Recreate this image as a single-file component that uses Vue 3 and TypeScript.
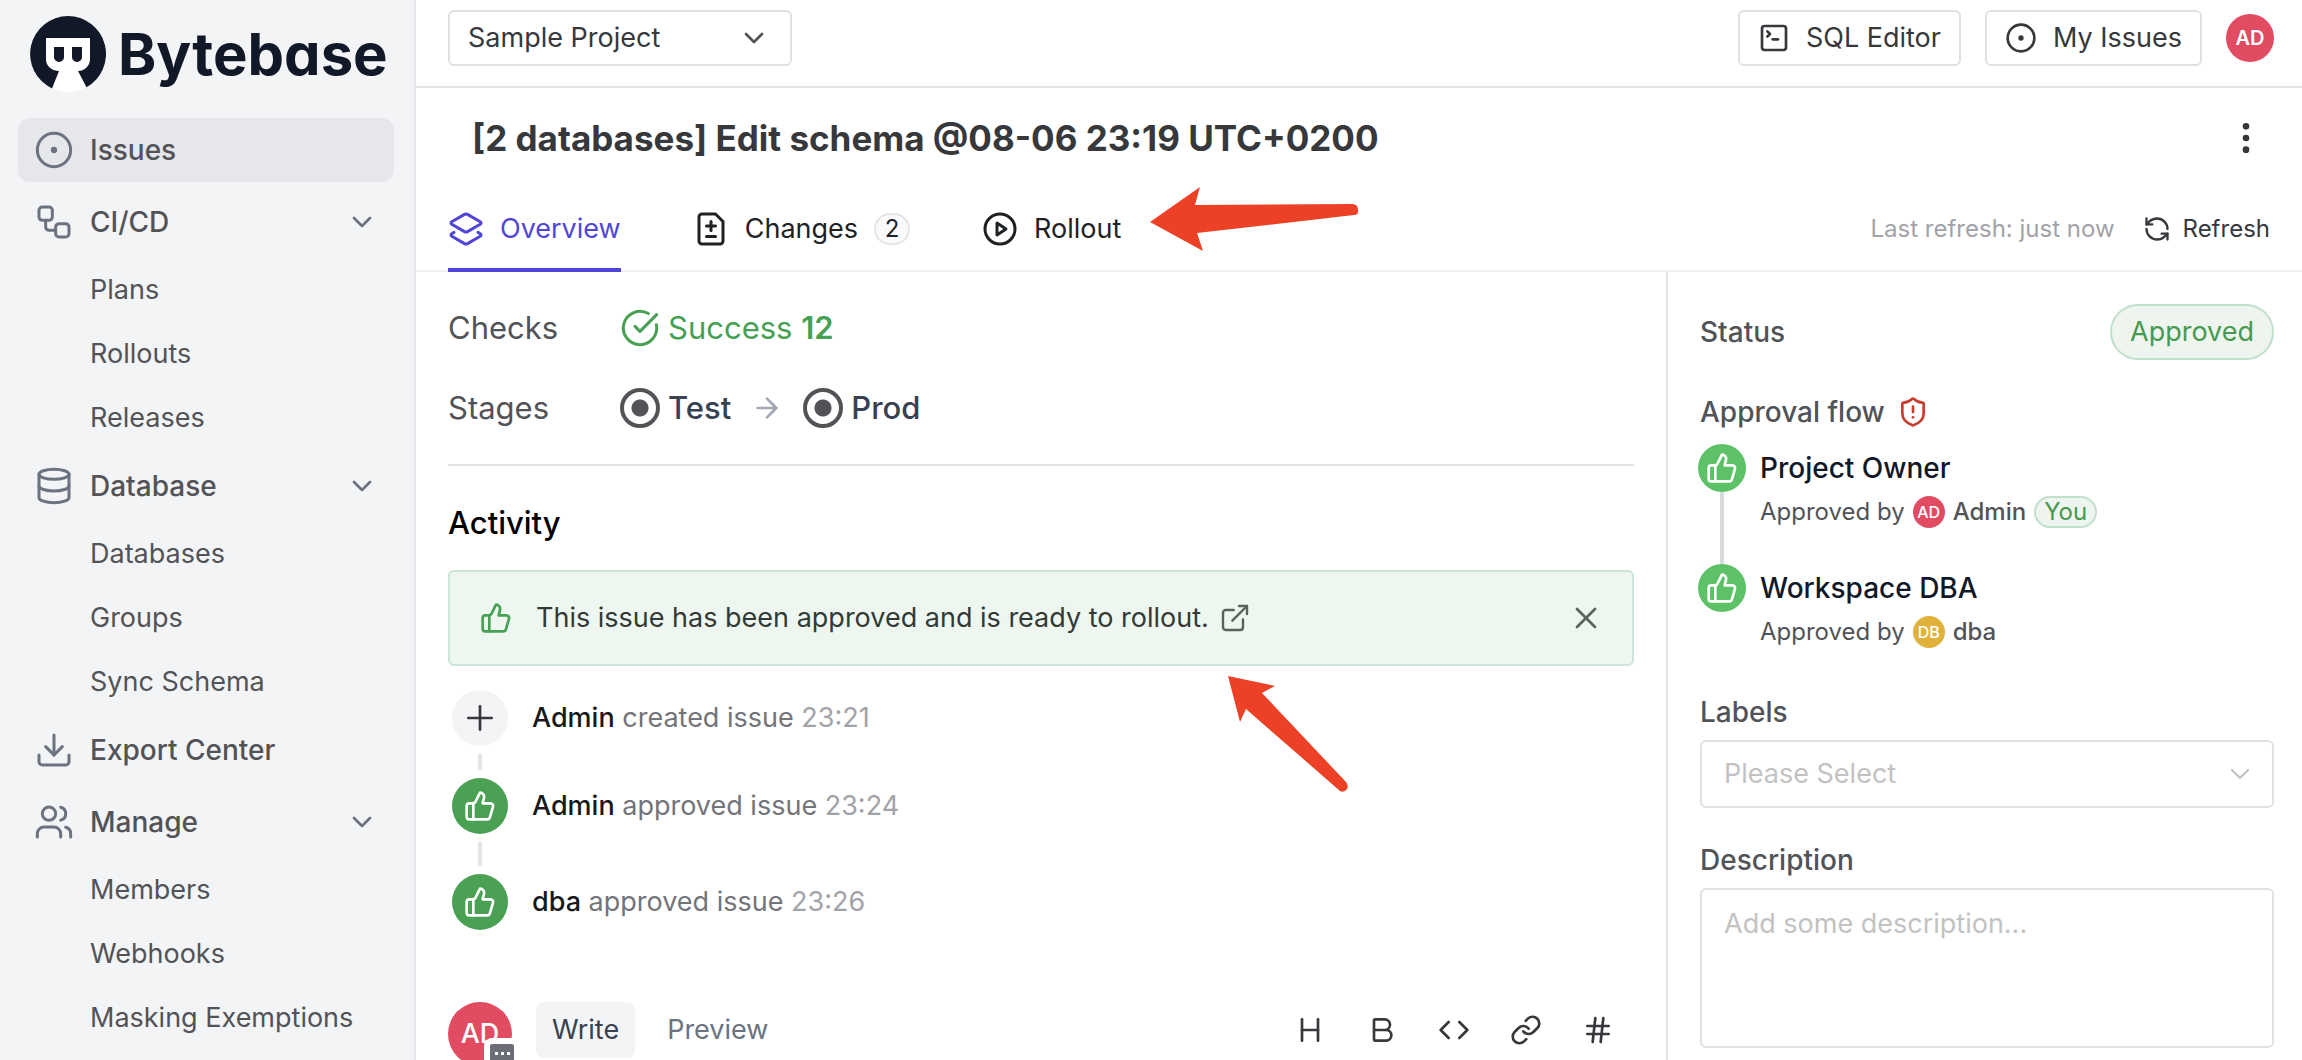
<script setup lang="ts">
import { h, ref, type FunctionalComponent } from 'vue'

type Shape = [tag: string, attrs: Record<string, string | number>]
const p = (d: string): Shape => ['path', { d }]
const c = (cx: number, cy: number, r: number): Shape => ['circle', { cx, cy, r }]
const r = (x: number, y: number, size: number): Shape => ['rect', { x, y, width: size, height: size, rx: 2 }]

const shapes: Record<string, Shape[]> = {
  issue: [c(12, 12, 10), c(12, 12, 1)],
  workflow: [r(3, 3, 8), p('M7 11v4a2 2 0 0 0 2 2h4'), r(13, 13, 8)],
  database: [['ellipse', { cx: 12, cy: 5, rx: 9, ry: 3 }], p('M3 5V19A9 3 0 0 0 21 19V5'), p('M3 12A9 3 0 0 0 21 12')],
  download: [p('M21 15v4a2 2 0 0 1-2 2H5a2 2 0 0 1-2-2v-4'), p('m7 10 5 5 5-5'), p('M12 15V3')],
  users: [p('M16 21v-2a4 4 0 0 0-4-4H6a4 4 0 0 0-4 4v2'), c(9, 7, 4), p('M22 21v-2a4 4 0 0 0-3-3.87'), p('M16 3.13a4 4 0 0 1 0 7.75')],
  chevron: [p('m6 9 6 6 6-6')],
  terminal: [p('m7 11 2-2-2-2'), p('M11 13h4'), r(3, 3, 18)],
  more: [c(12, 5, 1), c(12, 12, 1), c(12, 19, 1)],
  layers: [
    p('M13 13.74a2 2 0 0 1-2 0L2.5 8.87a1 1 0 0 1 0-1.74L11 2.26a2 2 0 0 1 2 0l8.5 4.87a1 1 0 0 1 0 1.74z'),
    p('m20 14.285 1.5.845a1 1 0 0 1 0 1.74L13 21.74a2 2 0 0 1-2 0l-8.5-4.87a1 1 0 0 1 0-1.74l1.5-.845'),
  ],
  diff: [p('M15 2H6a2 2 0 0 0-2 2v16a2 2 0 0 0 2 2h12a2 2 0 0 0 2-2V7Z'), p('M9 10h6'), p('M12 13V7'), p('M9 17h6')],
  play: [c(12, 12, 10), p('M10 8l6 4-6 4z')],
  refresh: [
    p('M21 12a9 9 0 0 0-9-9 9.75 9.75 0 0 0-6.74 2.74L3 8'),
    p('M3 3v5h5'),
    p('M3 12a9 9 0 0 0 9 9 9.75 9.75 0 0 0 6.74-2.74L21 16'),
    p('M16 16h5v5'),
  ],
  check: [p('M21.801 10A10 10 0 1 1 17 3.335'), p('m9 11 3 3L22 4')],
  arrow: [p('M5 12h14'), p('m12 5 7 7-7 7')],
  thumb: [
    p('M7 10v12'),
    p('M15 5.88 14 10h5.83a2 2 0 0 1 1.92 2.56l-2.33 8A2 2 0 0 1 17.5 22H4a2 2 0 0 1-2-2v-8a2 2 0 0 1 2-2h2.76a2 2 0 0 0 1.79-1.11L12 2a3.13 3.13 0 0 1 3 3.88Z'),
  ],
  external: [p('M18 13v6a2 2 0 0 1-2 2H5a2 2 0 0 1-2-2V8a2 2 0 0 1 2-2h6'), p('M15 3h6v6'), p('M10 14 21 3')],
  close: [p('M18 6 6 18'), p('m6 6 12 12')],
  plus: [p('M5 12h14'), p('M12 5v14')],
  shield: [
    p('M20 13c0 5-3.5 7.5-7.66 8.95a1 1 0 0 1-.67-.01C7.5 20.5 4 18 4 13V6a1 1 0 0 1 1-1c2 0 4.5-1.2 6.24-2.72a1.17 1.17 0 0 1 1.52 0C14.51 3.81 17 5 19 5a1 1 0 0 1 1 1z'),
    p('M12 8v4'),
    p('M12 16h.01'),
  ],
  heading: [p('M6 12h12'), p('M6 20V4'), p('M18 20V4')],
  bold: [p('M6 12h9a4 4 0 0 1 0 8H7a1 1 0 0 1-1-1V5a1 1 0 0 1 1-1h7a4 4 0 0 1 0 8')],
  code: [p('m16 18 6-6-6-6'), p('m8 6-6 6 6 6')],
  link: [
    p('M10 13a5 5 0 0 0 7.54.54l3-3a5 5 0 0 0-7.07-7.07l-1.72 1.71'),
    p('M14 11a5 5 0 0 0-7.54-.54l-3 3a5 5 0 0 0 7.07 7.07l1.71-1.71'),
  ],
  hash: [p('M4 9h16'), p('M4 15h16'), p('M10 3 8 21'), p('M16 3l-2 18')],
}

const Icon: FunctionalComponent<{ name: string; size?: number; weight?: number }> = (props) =>
  h(
    'svg',
    {
      class: 'icon',
      width: props.size ?? 32,
      height: props.size ?? 32,
      viewBox: '0 0 24 24',
      fill: 'none',
      stroke: 'currentColor',
      'stroke-width': props.weight ?? 2,
      'stroke-linecap': 'round',
      'stroke-linejoin': 'round',
      'aria-hidden': 'true',
    },
    shapes[props.name].map(([tag, attrs]) => h(tag, attrs)),
  )
Icon.props = ['name', 'size', 'weight']

const nav = [
  { label: 'Issues', icon: 'issue', active: true, children: [] },
  { label: 'CI/CD', icon: 'workflow', children: ['Plans', 'Rollouts', 'Releases'] },
  { label: 'Database', icon: 'database', children: ['Databases', 'Groups', 'Sync Schema'] },
  { label: 'Export Center', icon: 'download', children: [] },
  { label: 'Manage', icon: 'users', children: ['Members', 'Webhooks', 'Masking Exemptions'] },
]

const activities = [
  { who: 'Admin', action: 'created issue', time: '23:21', icon: 'plus' },
  { who: 'Admin', action: 'approved issue', time: '23:24', icon: 'thumb' },
  { who: 'dba', action: 'approved issue', time: '23:26', icon: 'thumb' },
]

const steps = [
  { role: 'Project Owner', initials: 'AD', who: 'Admin', you: true },
  { role: 'Workspace DBA', initials: 'DB', who: 'dba', you: false },
]

const tools = ['heading', 'bold', 'code', 'link', 'hash']
const description = ref('')
</script>

<template>
  <div class="app">
    <aside class="sidebar">
      <a class="brand" href="#">
        <svg width="76" height="76" viewBox="0 0 76 76" aria-hidden="true">
          <circle cx="38" cy="38" r="38" fill="#fff" />
          <path
            fill="#111827"
            d="M38 0a38 38 0 0 1 18.500 71.200L48 55a12 12 0 0 0 12-12V22H16v21a12 12 0 0 0 13 12L22 72.400A38 38 0 0 1 38 0Z"
          />
          <path fill="#111827" d="M24 31h10v10a5 5 0 0 1-10 0zM42 31h10v10a5 5 0 0 1-10 0z" />
        </svg>
        <span>Bytebase</span>
      </a>
      <nav>
        <div v-for="item in nav" :key="item.label" class="group">
          <a href="#" class="item" :class="{ active: item.active }">
            <Icon :name="item.icon" :size="40" :weight="1.8" />
            <span>{{ item.label }}</span>
            <Icon v-if="item.children.length" name="chevron" class="chev" />
          </a>
          <a v-for="child in item.children" :key="child" href="#" class="child">{{ child }}</a>
        </div>
      </nav>
    </aside>

    <div class="main">
      <header class="topbar">
        <div class="select project">
          <select aria-label="Project">
            <option>Sample Project</option>
          </select>
          <Icon name="chevron" />
        </div>
        <div class="actions">
          <button class="btn"><Icon name="terminal" />SQL Editor</button>
          <button class="btn"><Icon name="issue" />My Issues</button>
          <span class="avatar md">AD</span>
        </div>
      </header>

      <div class="title">
        <h1>[2 databases] Edit schema @08-06 23:19 UTC+0200</h1>
        <button class="plain" aria-label="More actions"><Icon name="more" :size="40" /></button>
      </div>

      <div class="tabrow">
        <nav class="tabs">
          <a href="#" class="tab current"><Icon name="layers" :size="36" /><span>Overview</span></a>
          <a href="#" class="tab"><Icon name="diff" :size="36" /><span>Changes</span><span class="count">2</span></a>
          <a href="#" class="tab">
            <Icon name="play" :size="36" /><span>Rollout</span>
            <svg class="mark mark-tab" width="210" height="66" viewBox="0 0 210 66" aria-hidden="true">
              <path d="M1 36 51 1 46 19 203 18Q209 18 209 24V26Q209 29 205 29L48 47 54 65Z" />
            </svg>
          </a>
        </nav>
        <div class="refresh">
          <span class="muted">Last refresh: just now</span>
          <button class="plain"><Icon name="refresh" :size="28" />Refresh</button>
        </div>
      </div>

      <div class="body">
        <section class="content">
          <dl class="facts">
            <div class="fact">
              <dt>Checks</dt>
              <dd class="ok"><Icon name="check" :size="40" :weight="1.8" /><span>Success <b>12</b></span></dd>
            </div>
            <div class="fact">
              <dt>Stages</dt>
              <dd class="stages">
                <span class="stage"><i class="dot"></i>Test</span>
                <Icon name="arrow" class="next" />
                <span class="stage"><i class="dot"></i>Prod</span>
              </dd>
            </div>
          </dl>

          <h2>Activity</h2>
          <div class="alert">
            <Icon name="thumb" class="thumb" />
            <p>
              This issue has been approved and is ready to rollout.
              <a href="#" aria-label="Open rollout"><Icon name="external" :weight="1.8" /></a>
              <svg class="mark mark-alert" width="122" height="120" viewBox="0 0 122 120" aria-hidden="true">
                <path d="M1 1 48 11 35 18 119 107Q122 111 120 114 117 118 113 116L19 34 13 47Z" />
              </svg>
            </p>
            <button class="plain" aria-label="Dismiss"><Icon name="close" :size="36" :weight="1.8" /></button>
          </div>

          <ol class="timeline">
            <li v-for="a in activities" :key="a.time">
              <span class="bullet" :class="a.icon"><Icon :name="a.icon" :size="a.icon === 'plus' ? 40 : 32" :weight="a.icon === 'plus' ? 1.6 : 2" /></span>
              <p><b>{{ a.who }}</b> {{ a.action }} <time>{{ a.time }}</time></p>
            </li>
          </ol>

          <div class="composer">
            <span class="avatar lg">
              AD
              <span class="chat"><i></i><i></i><i></i></span>
            </span>
            <div class="modes">
              <button class="mode on">Write</button>
              <button class="mode">Preview</button>
            </div>
            <div class="tools">
              <button v-for="t in tools" :key="t" class="plain" :aria-label="t"><Icon :name="t" /></button>
            </div>
          </div>
        </section>

        <aside class="panel">
          <div class="status">
            <h3>Status</h3>
            <span class="tag">Approved</span>
          </div>
          <h3 class="flow">Approval flow <Icon name="shield" class="risk" /></h3>
          <ol class="steps">
            <li v-for="s in steps" :key="s.role">
              <span class="ring"><Icon name="thumb" /></span>
              <div>
                <strong>{{ s.role }}</strong>
                <p>
                  Approved by <span class="avatar sm" :class="{ gold: !s.you }">{{ s.initials }}</span>
                  <b>{{ s.who }}</b>
                  <span v-if="s.you" class="tag small">You</span>
                </p>
              </div>
            </li>
          </ol>
          <label for="labels">Labels</label>
          <div class="select labels">
            <select id="labels">
              <option>Please Select</option>
            </select>
            <Icon name="chevron" :weight="1.6" />
          </div>
          <label for="description">Description</label>
          <textarea id="description" v-model="description" placeholder="Add some description..."></textarea>
        </aside>
      </div>
    </div>
  </div>
</template>

<style>
body {
  margin: 0;
  background: #fff;
}
</style>

<style scoped>
.app {
  display: flex;
  height: 100vh;
  overflow: hidden;
  font-family: Inter, "Liberation Sans", sans-serif;
  font-size: 27px;
  line-height: 40px;
  color: #36383c;
}
.app * {
  box-sizing: border-box;
}
a {
  color: inherit;
  text-decoration: none;
}
button,
select,
textarea {
  font: inherit;
  color: inherit;
  background: none;
}
h1, h2, h3, p, ol, dl, dd {
  margin: 0;
  padding: 0;
}
ol {
  list-style: none;
}
b, strong {
  font-weight: 500;
}
.icon {
  display: block;
  flex: none;
}
.plain {
  display: flex;
  align-items: center;
  gap: 12px;
  padding: 0;
  border: 0;
}

.sidebar {
  flex: none;
  width: 416px;
  padding: 16px 20px 0 18px;
  border-right: 2px solid #e5e7eb;
  background: #f3f4f6;
  color: #525357;
}
.brand {
  display: flex;
  align-items: center;
  gap: 12px;
  margin: 0 0 22px 12px;
  font-size: 58px;
  font-weight: 700;
  line-height: 76px;
  font-feature-settings: "cv11";
  color: #111827;
}
.group {
  display: flow-root;
}
.item {
  display: flex;
  align-items: center;
  gap: 16px;
  height: 64px;
  margin: 4px 0;
  padding: 0 16px;
  border-radius: 12px;
  font-size: 28px;
  font-weight: 500;
}
.item.active {
  background: #e5e7eb;
}
.item .icon {
  color: #6b7280;
}
.item .chev {
  margin-left: auto;
}
.child {
  display: block;
  padding-left: 72px;
  line-height: 64px;
}

.main {
  flex: 1;
  min-width: 0;
  display: flex;
  flex-direction: column;
}
.topbar {
  display: flex;
  justify-content: space-between;
  padding: 10px 28px 20px 32px;
  border-bottom: 2px solid #e5e5e8;
}
.select {
  display: grid;
  align-items: center;
}
.select > * {
  grid-area: 1 / 1;
}
.select select {
  width: 100%;
  appearance: none;
  border: 2px solid #e0e0e6;
  border-radius: 6px;
}
.select .icon {
  justify-self: end;
  pointer-events: none;
}
.project {
  width: 344px;
}
.project select {
  height: 56px;
  padding: 0 18px;
}
.project .icon {
  margin-right: 22px;
  color: #525357;
}
.actions {
  display: flex;
  align-items: center;
  gap: 24px;
}
.btn {
  display: flex;
  align-items: center;
  gap: 16px;
  height: 56px;
  padding: 0 18px;
  border: 2px solid #e0e0e6;
  border-radius: 6px;
}
.avatar {
  position: relative;
  display: inline-flex;
  flex: none;
  align-items: center;
  justify-content: center;
  border-radius: 50%;
  background: #e24c62;
  color: #fff;
  font-weight: 500;
}
.avatar.md {
  width: 48px;
  height: 48px;
  font-size: 20px;
  font-weight: 600;
}
.avatar.lg {
  width: 64px;
  height: 64px;
}
.avatar.sm {
  width: 32px;
  height: 32px;
  font-size: 16px;
}
.avatar.gold {
  background: #e0b23c;
}

.title {
  display: flex;
  align-items: center;
  justify-content: space-between;
  padding: 26px 36px 24px 56px;
}
h1 {
  font-size: 35px;
  line-height: 48px;
  font-weight: 700;
}
.tabrow {
  display: flex;
  justify-content: space-between;
  padding: 0 32px;
  border-bottom: 2px solid #efeff2;
}
.tabs {
  display: flex;
  gap: 72px;
  margin-bottom: -2px;
}
.tab {
  position: relative;
  display: flex;
  align-items: center;
  gap: 16px;
  padding: 25px 0 21px;
  border-bottom: 4px solid transparent;
  line-height: 36px;
  color: #1f2225;
}
.tab.current {
  border-color: #4f46d8;
  color: #4f46d8;
}
.count {
  min-width: 36px;
  border: 2px solid #e5e5ea;
  border-radius: 16px;
  background: #fafafc;
  font-size: 24px;
  line-height: 28px;
  text-align: center;
}
.mark {
  position: absolute;
  z-index: 1;
  fill: #ec4126;
}
.mark-tab {
  top: 0;
  left: 100%;
  margin-left: 28px;
}
.refresh {
  display: flex;
  align-items: center;
  gap: 28px;
  padding-top: 2px;
  font-size: 24px;
}
.muted {
  color: #a1a3a8;
}

.body {
  flex: 1;
  display: flex;
  min-height: 0;
}
.content {
  flex: 1;
  min-width: 0;
  padding: 36px 32px 0;
}
.facts {
  display: grid;
  gap: 40px;
  padding-bottom: 36px;
  border-bottom: 2px solid #e2e3e6;
  font-size: 31px;
  color: #525357;
}
.fact {
  display: flex;
}
.fact dt {
  width: 172px;
}
.ok,
.stage {
  display: flex;
  align-items: center;
  gap: 8px;
}
.ok {
  color: #46a154;
}
.ok b {
  font-weight: 600;
}
.stages {
  display: flex;
  align-items: center;
  gap: 20px;
}
.stage {
  font-weight: 500;
  color: #374151;
}
.dot {
  width: 40px;
  height: 40px;
  border: 4px solid #525357;
  border-radius: 50%;
  background: radial-gradient(circle, #525357 8px, transparent 9px);
}
.next {
  color: #a3a7b3;
}
h2 {
  margin: 36px 0 26px;
  font-size: 31px;
  line-height: 42px;
  font-weight: 500;
  color: #000;
}
.alert {
  display: flex;
  align-items: center;
  gap: 24px;
  padding: 28px 28px 28px 30px;
  border: 2px solid #cbe6d6;
  border-radius: 6px;
  background: #edf7ef;
  line-height: 32px;
}
.alert p {
  position: relative;
  display: flex;
  align-items: center;
  gap: 10px;
  color: #333a36;
}
.alert .thumb {
  color: #46a154;
}
.alert .plain {
  margin-left: auto;
}
.alert a,
.alert .plain {
  color: #5a625d;
}
.mark-alert {
  top: 100%;
  right: 0;
  margin: 41px -98px 0 0;
}
.timeline {
  margin-top: 24px;
}
.timeline li {
  position: relative;
  display: flex;
  align-items: center;
  gap: 24px;
  padding-left: 4px;
}
.timeline li + li {
  margin-top: 32px;
}
.timeline li + li + li {
  margin-top: 40px;
}
.timeline li + li::before {
  content: "";
  position: absolute;
  left: 30px;
  bottom: 100%;
  width: 4px;
  height: 16px;
  margin-bottom: 8px;
  background: #e5e5e8;
}
.timeline li + li + li::before {
  height: 24px;
}
.bullet {
  display: grid;
  place-items: center;
  width: 56px;
  height: 56px;
  border-radius: 50%;
  background: #f3f4f6;
}
.bullet.thumb {
  background: #4aa154;
  color: #fff;
}
.timeline p {
  color: #737479;
}
.timeline b {
  color: #18191b;
}
time {
  color: #a1a3a8;
}
.composer {
  display: flex;
  align-items: flex-start;
  margin-top: 72px;
}
.chat {
  position: absolute;
  left: 36px;
  top: 36px;
  display: flex;
  align-items: center;
  justify-content: center;
  gap: 3px;
  width: 36px;
  height: 30px;
  border: 6px solid #fff;
  border-radius: 8px;
  background: #6b6e76;
}
.chat i {
  width: 3px;
  height: 3px;
  background: #fff;
}
.modes {
  display: flex;
  gap: 16px;
  margin-left: 24px;
}
.mode {
  height: 56px;
  padding: 0 16px;
  border: 0;
  border-radius: 8px;
  color: #6b7280;
}
.mode.on {
  background: #f3f4f6;
  color: #374151;
}
.tools {
  display: flex;
  gap: 40px;
  margin-left: auto;
  padding: 12px 20px 0 0;
}

.panel {
  flex: none;
  width: 636px;
  padding: 32px 28px 0 32px;
  border-left: 2px solid #e5e5e8;
}
h3,
label {
  font-size: 28px;
  font-weight: 500;
  color: #525357;
}
.status {
  display: flex;
  align-items: center;
  justify-content: space-between;
}
.tag {
  padding: 0 18px;
  border: 2px solid #c0e0c9;
  border-radius: 28px;
  background: #edf5ee;
  line-height: 52px;
  color: #46994f;
}
.tag.small {
  padding: 0 8px;
  line-height: 28px;
}
.flow {
  display: flex;
  gap: 12px;
  align-items: center;
  margin: 32px 0 12px;
}
.risk {
  color: #c43d2f;
}
.steps {
  margin: 0 0 44px -2px;
}
.steps li {
  position: relative;
  display: flex;
  gap: 14px;
}
.steps li + li {
  margin-top: 36px;
}
.steps li + li::before {
  content: "";
  position: absolute;
  left: 22px;
  bottom: 100%;
  width: 4px;
  height: 72px;
  background: #d9dadc;
}
.ring {
  display: grid;
  place-items: center;
  width: 48px;
  height: 48px;
  border-radius: 50%;
  background: #5dc167;
  color: #fff;
}
.steps strong {
  display: block;
  font-size: 28px;
  line-height: 48px;
  color: #111827;
}
.steps p {
  display: flex;
  align-items: center;
  gap: 8px;
  margin-top: 4px;
  font-size: 24px;
  line-height: 32px;
  color: #525357;
}
label {
  display: block;
  margin-bottom: 8px;
}
.labels {
  margin-bottom: 32px;
}
.labels select {
  height: 68px;
  padding: 0 22px;
  color: #c2c2c2;
}
.labels .icon {
  margin-right: 18px;
  color: #c2c2c2;
}
textarea {
  display: block;
  width: 100%;
  height: 160px;
  padding: 16px 22px;
  border: 2px solid #e0e0e6;
  border-radius: 6px;
  line-height: 36px;
  resize: none;
}
textarea::placeholder {
  color: #c2c2c2;
}
</style>
